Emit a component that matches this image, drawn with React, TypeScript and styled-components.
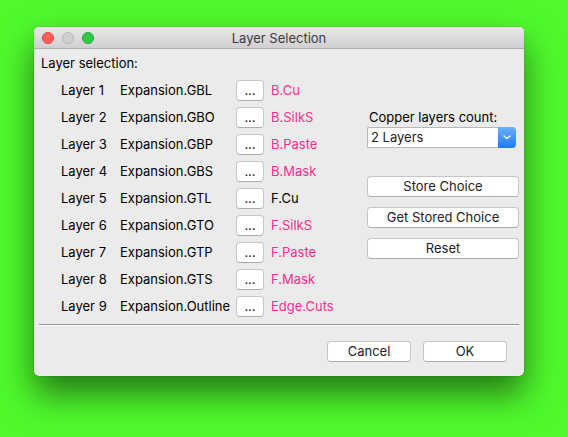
import React from "react";
import styled, { createGlobalStyle } from "styled-components";

const GlobalStyle = createGlobalStyle`
  *, *::before, *::after { box-sizing: border-box; }
  html, body, #root { height: 100%; }
  body {
    margin: 0;
    background: #4ff92c;
    color: #000;
    font: 13px/17px Inter, "Liberation Sans", sans-serif;
  }
`;

const Desktop = styled.main`
  min-height: 100%;
  padding: 27px 44px 60px 34px;
  overflow: hidden;
`;

const Window = styled.section`
  border-radius: 5px;
  background: #ebebeb;
  box-shadow: 0 0 1px rgba(0, 0, 0, 0.5), 0 18px 34px rgba(0, 0, 0, 0.52);
`;

const TitleBar = styled.header`
  display: grid;
  grid-template-columns: 60px 1fr 60px;
  align-items: center;
  height: 22px;
  padding: 0 8px;
  border-bottom: 1px solid #b1afb1;
  border-radius: 5px 5px 0 0;
  background: linear-gradient(#e9e6e9, #d2cfd2);
  box-shadow: inset 0 1px #f4f2f4;
`;

const Lights = styled.div`
  display: flex;
  gap: 8px;
`;

const Light = styled.button<{ $fill: string; $edge: string }>`
  width: 12px;
  height: 12px;
  padding: 0;
  border: 1px solid ${(p) => p.$edge};
  border-radius: 50%;
  background: ${(p) => p.$fill};
`;

const Title = styled.h1`
  margin: 0;
  color: #3c3a3c;
  font-size: 13px;
  font-weight: 400;
  line-height: 20px;
  text-align: center;
`;

const Content = styled.div`
  padding: 6px 5px 14px;
`;

const Heading = styled.h2`
  margin: 0 0 5px;
  padding-left: 2px;
  font-size: 13px;
  font-weight: 400;
`;

const Columns = styled.div`
  display: flex;
  justify-content: space-between;
  padding-left: 22px;
`;

const LayerTable = styled.table`
  width: 290px;
  table-layout: fixed;
  border-collapse: collapse;
`;

const Column = styled.col<{ $width: number }>`
  width: ${(p) => p.$width}px;
`;

const Row = styled.tr`
  height: 27px;
`;

const Cell = styled.td<{ $assigned?: boolean }>`
  padding: 0;
  color: ${(p) => (p.$assigned ? "#ff2d8c" : "#000")};
  white-space: nowrap;
`;

const PushButton = styled.button<{ $width?: string }>`
  display: block;
  width: ${(p) => p.$width ?? "100%"};
  height: 21px;
  padding: 0 0 1px;
  border: 1px solid #c6c6c6;
  border-bottom-color: #acacac;
  border-radius: 4px;
  background: #fff;
  color: #222;
  font: inherit;
`;

const SidePanel = styled.div`
  display: flex;
  flex-direction: column;
  width: 152px;
  padding-top: 32px;
`;

const FieldLabel = styled.label`
  padding: 0 0 2px 2px;
  line-height: 16px;
  white-space: nowrap;
`;

const SelectBox = styled.div`
  display: grid;
  grid-template-columns: 1fr 18px;
  height: 21px;
  margin: 0 3px 28px 0;
`;

const Select = styled.select`
  grid-area: 1 / 1 / 2 / 3;
  appearance: none;
  min-width: 0;
  padding: 0 20px 0 3px;
  border: 1px solid #b8b8b8;
  border-radius: 0 4px 4px 0;
  background: #fff;
  color: #222;
  font: inherit;
`;

const Arrow = styled.span`
  grid-area: 1 / 2 / 2 / 3;
  display: grid;
  place-items: center;
  border-radius: 0 4px 4px 0;
  background: linear-gradient(#6bb0f9, #1a7bfd);
  pointer-events: none;
`;

const ActionStack = styled.div`
  display: grid;
  gap: 10px;
`;

const Divider = styled.hr`
  height: 2px;
  margin: 4px 0 15px;
  border: 0;
  border-top: 1px solid #959595;
  background: #f9f9f9;
`;

const Footer = styled.footer`
  display: flex;
  justify-content: flex-end;
  gap: 12px;
  padding-right: 12px;
`;

const layers = [
  { file: "Expansion.GBL", target: "B.Cu", assigned: true },
  { file: "Expansion.GBO", target: "B.SilkS", assigned: true },
  { file: "Expansion.GBP", target: "B.Paste", assigned: true },
  { file: "Expansion.GBS", target: "B.Mask", assigned: true },
  { file: "Expansion.GTL", target: "F.Cu", assigned: false },
  { file: "Expansion.GTO", target: "F.SilkS", assigned: true },
  { file: "Expansion.GTP", target: "F.Paste", assigned: true },
  { file: "Expansion.GTS", target: "F.Mask", assigned: true },
  { file: "Expansion.Outline", target: "Edge.Cuts", assigned: true },
];

export default function App() {
  return (
    <>
      <GlobalStyle />
      <Desktop>
        <Window role="dialog" aria-labelledby="dialog-title">
          <TitleBar>
            <Lights>
              <Light aria-label="Close" $fill="#ff5e59" $edge="#e2453f" />
              <Light aria-label="Minimize" disabled $fill="#d0ced0" $edge="#b9b7b9" />
              <Light aria-label="Zoom" $fill="#33c748" $edge="#26a934" />
            </Lights>
            <Title id="dialog-title">Layer Selection</Title>
          </TitleBar>
          <Content>
            <Heading id="layers-heading">Layer selection:</Heading>
            <Columns>
              <LayerTable aria-labelledby="layers-heading">
                <colgroup>
                  <Column $width={59} />
                  <Column $width={116} />
                  <Column $width={35} />
                  <Column $width={80} />
                </colgroup>
                <tbody>
                  {layers.map((layer, i) => (
                    <Row key={layer.file}>
                      <Cell>Layer {i + 1}</Cell>
                      <Cell>{layer.file}</Cell>
                      <Cell>
                        <PushButton $width="28px" aria-label={`Choose layer for ${layer.file}`}>
                          ...
                        </PushButton>
                      </Cell>
                      <Cell $assigned={layer.assigned}>{layer.target}</Cell>
                    </Row>
                  ))}
                </tbody>
              </LayerTable>
              <SidePanel>
                <FieldLabel htmlFor="copper-count">Copper layers count:</FieldLabel>
                <SelectBox>
                  <Select id="copper-count" defaultValue="2">
                    <option value="2">2 Layers</option>
                    <option value="4">4 Layers</option>
                    <option value="6">6 Layers</option>
                  </Select>
                  <Arrow>
                    <svg width="8" height="5" viewBox="0 0 8 5" fill="none" aria-hidden="true">
                      <path d="M1 1l3 2.6L7 1" stroke="#fff" strokeWidth="1.3" strokeLinecap="round" strokeLinejoin="round" />
                    </svg>
                  </Arrow>
                </SelectBox>
                <ActionStack>
                  <PushButton>Store Choice</PushButton>
                  <PushButton>Get Stored Choice</PushButton>
                  <PushButton>Reset</PushButton>
                </ActionStack>
              </SidePanel>
            </Columns>
            <Divider />
            <Footer>
              <PushButton $width="84px">Cancel</PushButton>
              <PushButton $width="84px">OK</PushButton>
            </Footer>
          </Content>
        </Window>
      </Desktop>
    </>
  );
}
